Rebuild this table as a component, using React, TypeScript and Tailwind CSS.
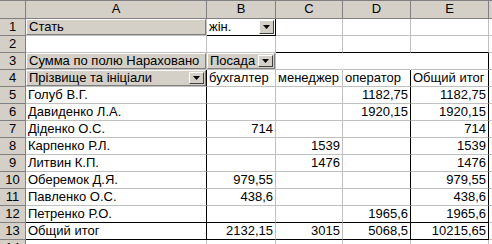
import React from 'react';

type Cell = {
  text?: string;
  num?: boolean;
  kind?: 'btn' | 'page';
  drop?: boolean;
  r?: boolean; // black right edge
  b?: boolean; // black bottom edge
  hideR?: boolean;
};

const COL_NAMES = ['A', 'B', 'C', 'D', 'E'];

const people: [string, string, string, string, string][] = [
  ['Голуб В.Г.', '', '', '1182,75', '1182,75'],
  ['Давиденко Л.А.', '', '', '1920,15', '1920,15'],
  ['Діденко О.С.', '714', '', '', '714'],
  ['Карпенко Р.Л.', '', '1539', '', '1539'],
  ['Литвин К.П.', '', '1476', '', '1476'],
  ['Оберемок Д.Я.', '979,55', '', '', '979,55'],
  ['Павленко О.С.', '438,6', '', '', '438,6'],
  ['Петренко Р.О.', '', '', '1965,6', '1965,6'],
];

const rows: Cell[][] = [
  [{ text: 'Стать', kind: 'btn' }, { text: 'жін.', kind: 'page', drop: true, r: true, b: true }, {}, {}, {}],
  [{}, {}, { b: true }, { b: true }, { b: true }],
  [
    { text: 'Сумма по полю Нараховано', kind: 'btn' },
    { text: 'Посада', kind: 'btn', drop: true },
    { hideR: true },
    { hideR: true },
    { r: true },
  ],
  [
    { text: 'Прізвище та ініціали', kind: 'btn', drop: true, r: true },
    { text: 'бухгалтер' },
    { text: 'менеджер' },
    { text: 'оператор', r: true },
    { text: 'Общий итог', r: true },
  ],
  ...people.map((p, i) => {
    const last = i === people.length - 1;
    return [
      { text: p[0], r: true, b: last },
      { text: p[1], num: true, b: last },
      { text: p[2], num: true, b: last },
      { text: p[3], num: true, r: true, b: last },
      { text: p[4], num: true, r: true, b: last },
    ] as Cell[];
  }),
  [
    { text: 'Общий итог', r: true, b: true },
    { text: '2132,15', num: true, b: true },
    { text: '3015', num: true, b: true },
    { text: '5068,5', num: true, r: true, b: true },
    { text: '10215,65', num: true, r: true, b: true },
  ],
  [{}, {}, {}, {}, {}],
];

function DropButton() {
  return (
    <div className="absolute right-px top-px bottom-px w-[15px] bg-[#d4d0c8] border border-t-white border-l-white border-r-[#404040] border-b-[#404040] flex items-center justify-center">
      <svg width="7" height="4" viewBox="0 0 7 4">
        <path d="M0 0h7L3.5 4z" fill="#000" />
      </svg>
    </div>
  );
}

function SheetCell({ cell }: { cell: Cell }) {
  const right = cell.r ? 'border-r-black' : cell.hideR ? 'border-r-white' : 'border-r-[#c0c0c0]';
  const bottom = cell.b ? 'border-b-black' : 'border-b-[#c0c0c0]';

  if (cell.kind === 'btn') {
    return (
      <div className={`relative border-r border-b ${right} ${bottom}`}>
        <div className="absolute inset-0 bg-[#d4d0c8] border border-t-white border-l-white border-r-[#808080] border-b-[#808080] pl-[2px] leading-[14px] whitespace-nowrap overflow-hidden">
          {cell.text}
          {cell.drop && <DropButton />}
        </div>
      </div>
    );
  }

  return (
    <div
      className={`relative bg-white border-r border-b ${right} ${bottom} px-[2px] leading-[16px] whitespace-nowrap overflow-hidden ${
        cell.num ? 'text-right' : 'text-left'
      }`}
    >
      {cell.text}
      {cell.drop && <DropButton />}
    </div>
  );
}

export default function App() {
  return (
    <div
      className="w-[492px] h-[244px] overflow-hidden bg-white text-black text-[13px]"
      style={{ fontFamily: '"Liberation Sans", Arial, sans-serif' }}
    >
      <div className="grid grid-cols-[26px_181px_69px_67px_68px_78px_1fr] grid-rows-[18px_repeat(14,17px)] border-t border-t-[#808080]">
        {/* column headers */}
        <div className="bg-[#d4d0c8] border-r border-b border-[#808080]" />
        {COL_NAMES.map((c) => (
          <div
            key={c}
            className="bg-[#d4d0c8] border-r border-b border-[#808080] text-center leading-[16px]"
          >
            {c}
          </div>
        ))}
        <div className="bg-[#d4d0c8] border-b border-[#808080]" />

        {rows.map((row, ri) => (
          <React.Fragment key={ri}>
            <div className="bg-[#d4d0c8] border-r border-b border-[#808080] text-center leading-[16px]">
              {ri + 1}
            </div>
            {row.map((cell, ci) => (
              <SheetCell key={ci} cell={cell} />
            ))}
            <div className="bg-white border-b border-[#c0c0c0]" />
          </React.Fragment>
        ))}
      </div>
    </div>
  );
}
